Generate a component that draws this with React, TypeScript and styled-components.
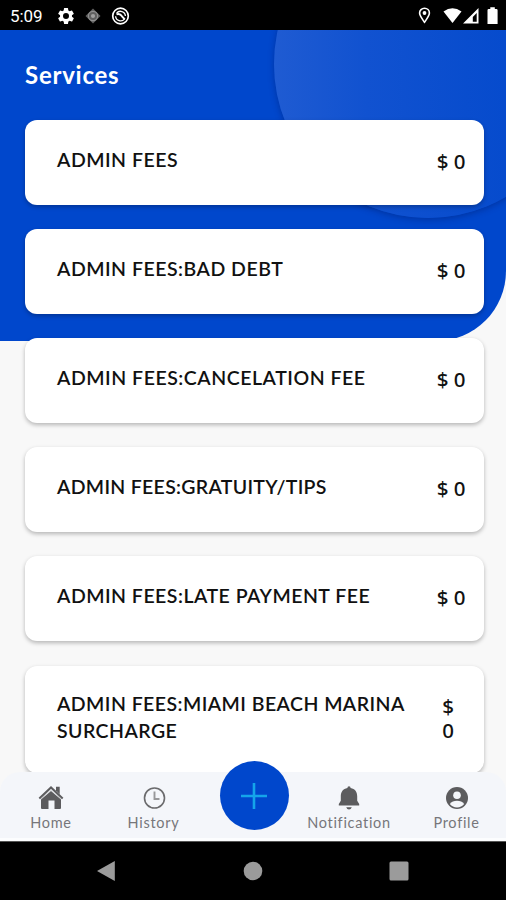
import React from "react";
import styled, { createGlobalStyle } from "styled-components";

const GlobalStyle = createGlobalStyle`
  * { box-sizing: border-box; }
  body { margin: 0; background: #f8f8f8; font-family: Lato, "Open Sans", sans-serif; }
`;

const Phone = styled.div`
  width: 506px;
  height: 900px;
  display: flex;
  flex-direction: column;
  overflow: hidden;
  background: #f8f8f8;
`;

const StatusBar = styled.header`
  height: 30px;
  flex: none;
  display: flex;
  align-items: center;
  justify-content: space-between;
  padding: 1px 7px 0 10px;
  background: #000;
  color: #fff;
`;

const StatusGroup = styled.div<{ $gap: number }>`
  display: flex;
  align-items: center;
  gap: ${(p) => p.$gap}px;
  svg { display: block; }
`;

const Clock = styled.span`
  width: 35px;
  font: 400 17px/20px Roboto, sans-serif;
  letter-spacing: -0.1px;
  white-space: nowrap;
  margin-right: 2px;
`;

const Screen = styled.main`
  position: relative;
  height: 742px;
  flex: none;
  overflow: hidden;
`;

const Backdrop = styled.div`
  position: absolute;
  inset: 0 0 auto 0;
  height: 311px;
  overflow: hidden;
  background: #0047cc;
  border-bottom-right-radius: 70px;
`;

const Bubble = styled.div`
  position: absolute;
  left: 274px;
  top: -120px;
  width: 308px;
  height: 308px;
  border-radius: 50%;
  background: linear-gradient(90deg, #1f5bd2 0%, #1152d0 30%, #064bcd 75%, #0047cc 100%);
  box-shadow: 0 2px 6px rgba(0, 20, 90, 0.35);
`;

const Content = styled.div`
  position: relative;
  padding: 30px 22px 0 25px;
`;

const Title = styled.h1`
  margin: 0 0 30px;
  font-size: 24px;
  line-height: 30px;
  font-weight: 700;
  letter-spacing: 0.75px;
  color: #fff;
`;

const ServiceList = styled.div`
  display: grid;
  gap: 24.1px;
`;

const Card = styled.article<{ $tall?: boolean }>`
  height: ${(p) => (p.$tall ? 107 : 85)}px;
  margin-top: ${(p) => (p.$tall ? 0.5 : 0)}px;
  padding: ${(p) => (p.$tall ? "24px 30px 0 32px" : "26px 18.5px 0 32px")};
  display: flex;
  justify-content: space-between;
  border-radius: 12px;
  background: #fff;
  box-shadow: 0 2px 4px rgba(0, 0, 0, 0.27);
`;

const ServiceName = styled.span<{ $spacing: number }>`
  width: 360px;
  font-size: 19.5px;
  line-height: 27px;
  font-weight: 600;
  letter-spacing: ${(p) => p.$spacing}px;
  color: #111;
`;

const Price = styled.span<{ $stacked?: boolean }>`
  width: ${(p) => (p.$stacked ? "12px" : "auto")};
  padding-top: ${(p) => (p.$stacked ? 4 : 3)}px;
  font-family: "Noto Sans", sans-serif;
  font-size: 20.5px;
  line-height: 24px;
  font-weight: 500;
  text-align: center;
  color: #111;
  white-space: ${(p) => (p.$stacked ? "normal" : "nowrap")};
`;

const TabDock = styled.nav`
  height: 69px;
  flex: none;
  position: relative;
  display: grid;
  grid-template-columns: 102px 102px 100px 90px 112px;
  background: #f4f6fa;
  border-bottom: 3px solid #fcfdfe;
  border-radius: 20px 20px 0 0;
`;

const Tab = styled.a<{ $shift?: number }>`
  display: flex;
  flex-direction: column;
  align-items: center;
  padding-top: 12px;
  padding-left: ${(p) => p.$shift || 0}px;
  color: #5c5c5e;
  svg { display: block; }
`;

const TabLabel = styled.span`
  margin-top: 4px;
  font-size: 14.5px;
  line-height: 17px;
  letter-spacing: 0.7px;
  color: #77777a;
`;

const AddButton = styled.button`
  justify-self: center;
  width: 69px;
  height: 69px;
  margin-top: -11px;
  padding: 0;
  border: 0;
  border-radius: 50%;
  display: grid;
  place-items: center;
  background: #0047cc;
`;

const SystemNav = styled.footer`
  flex: 1;
  padding: 0 97px 0 96px;
  display: flex;
  align-items: center;
  justify-content: space-between;
  background: #000;
  border-top: 1px solid #555;
`;

const services = [
  { name: "ADMIN FEES", spacing: 0.5 },
  { name: "ADMIN FEES:BAD DEBT", spacing: 0.5 },
  { name: "ADMIN FEES:CANCELATION FEE", spacing: 0.53 },
  { name: "ADMIN FEES:GRATUITY/TIPS", spacing: 0.3 },
  { name: "ADMIN FEES:LATE PAYMENT FEE", spacing: 0.49 },
  { name: "ADMIN FEES:MIAMI BEACH MARINA SURCHARGE", spacing: 0.45, tall: true },
];

const GearIcon = () => (
  <svg width="20" height="20" viewBox="0 0 24 24" fill="#fff">
    <path d="M19.14 12.94c.04-.3.06-.61.06-.94s-.02-.64-.07-.94l2.03-1.58a.5.5 0 0 0 .12-.61l-1.92-3.32a.49.49 0 0 0-.59-.22l-2.39.96a7 7 0 0 0-1.62-.94L14.4 2.81a.48.48 0 0 0-.48-.41h-3.84a.47.47 0 0 0-.47.41l-.36 2.54c-.59.24-1.13.57-1.62.94l-2.39-.96a.48.48 0 0 0-.59.22L2.74 8.87a.47.47 0 0 0 .12.61l2.03 1.58a6 6 0 0 0 0 1.88l-2.03 1.58a.5.5 0 0 0-.12.61l1.92 3.32c.12.22.37.29.59.22l2.39-.96c.5.38 1.03.7 1.62.94l.36 2.54c.05.24.24.41.48.41h3.84c.24 0 .44-.17.47-.41l.36-2.54a7 7 0 0 0 1.62-.94l2.39.96c.22.08.47 0 .59-.22l1.92-3.32a.47.47 0 0 0-.12-.61zM12 15.6a3.6 3.6 0 1 1 0-7.2 3.6 3.6 0 0 1 0 7.2z" />
  </svg>
);

const TargetIcon = () => (
  <svg width="16" height="16" viewBox="0 0 16 16" fill="none">
    <path d="M8 .5 15.5 8 8 15.5.5 8z" fill="#606060" />
    <circle cx="8" cy="8" r="4.6" stroke="#909090" strokeWidth="1.1" />
    <circle cx="8" cy="8" r="2.1" fill="#a0a0a0" />
  </svg>
);

const SyncIcon = () => (
  <svg width="20" height="18" viewBox="0 0 20 18" fill="none" stroke="#fff">
    <circle cx="10.5" cy="9" r="7.8" strokeWidth="1.7" />
    <path d="M6.5 6.4A4.9 4.9 0 0 1 15.4 9M14.5 11.8A4.9 4.9 0 0 1 5.6 9.300" strokeWidth="1.3" />
    <path d="M6.5 7.3Q10 6 12 9.300L14.800 12.300" strokeWidth="1.9" />
  </svg>
);

const PinIcon = () => (
  <svg width="13" height="17" viewBox="0 0 13 17" fill="none" stroke="#fff">
    <path d="M6.5 15.2C4.1 11.8 1.6 8.9 1.6 6.1a4.9 4.9 0 0 1 9.8 0c0 2.8-2.5 5.7-4.9 9.1z" strokeWidth="1.6" />
    <circle cx="6.5" cy="6" r="1.9" fill="#fff" stroke="none" />
  </svg>
);

const SignalIcons = () => (
  <svg width="56" height="18" viewBox="0 0 56 18" fill="#fff">
    <path d="M.5 4.5Q9.5-2 18.5 4.500L9.500 16z" />
    <path d="M35.5 1v15.5H20zM33.7 6 29.8 10v4.700h3.900z" fillRule="evenodd" />
    <path d="M44.5 3.200q0-1.200 1.200-1.200h1.600V.3h4.500V2h1.600q1.200 0 1.200 1.200V17H44.500z" />
  </svg>
);

const HomeIcon = () => (
  <svg width="26" height="26" viewBox="0 0 26 26" fill="currentColor">
    <path d="M3 15.500 13 7l10 8.500V24q0 1-1 1h-5.500v-8.500h-6V25H4q-1 0-1-1z" />
    <path d="M1.300 14.600 13 3.500l11.700 11.100" fill="none" stroke="currentColor" strokeWidth="2" />
    <path d="M18 2.700h3.700v7.500L18 6.500z" />
    <path d="M3 14.800 13 5.500l10 9.300" fill="none" stroke="#c0c1c3" strokeWidth=".9" />
  </svg>
);

const ClockIcon = () => (
  <svg width="26" height="26" viewBox="0 0 26 26" fill="none" stroke="#6b6b6d">
    <circle cx="13.5" cy="14" r="10" strokeWidth="1.6" />
    <path d="M13.5 7.500v7.500h5" strokeWidth="1.9" stroke="#98989a" />
  </svg>
);

const BellIcon = () => (
  <svg width="26" height="26" viewBox="0 0 26 26" fill="currentColor">
    <path d="M11.4 4q0-1.700 1.600-1.700T14.600 4c4.400.8 6.600 4 6.600 8.300v4.500l2 3.200v1.500H2.800V20l2-3.200v-4.500c0-4.300 2.200-7.500 6.600-8.300zM10.200 23.300h5.600Q15 25.500 13 25.500t-2.800-2.200z" />
  </svg>
);

const ProfileIcon = () => (
  <svg width="26" height="26" viewBox="0 0 26 26">
    <circle cx="13" cy="14" r="11" fill="#5c5c5e" />
    <circle cx="13" cy="11.3" r="3.8" fill="#f4f6fa" />
    <path d="M5.8 20q2.500-3.300 7.200-3.300t7.200 3.300A9.300 9.300 0 0 1 5.800 20z" fill="#f4f6fa" />
  </svg>
);

const PlusIcon = () => (
  <svg width="28" height="28" viewBox="0 0 28 28" stroke="#14a5ea" strokeWidth="2.6">
    <path d="M14 1v26M1 14h26" />
  </svg>
);

export default function App() {
  return (
    <>
      <GlobalStyle />
      <Phone>
        <StatusBar>
          <StatusGroup $gap={9}>
            <Clock>5:09</Clock>
            <GearIcon />
            <TargetIcon />
            <SyncIcon />
          </StatusGroup>
          <StatusGroup $gap={12}>
            <PinIcon />
            <SignalIcons />
          </StatusGroup>
        </StatusBar>
        <Screen>
          <Backdrop>
            <Bubble />
          </Backdrop>
          <Content>
            <Title>Services</Title>
            <ServiceList>
              {services.map((s) => (
                <Card key={s.name} $tall={s.tall}>
                  <ServiceName $spacing={s.spacing}>{s.name}</ServiceName>
                  <Price $stacked={s.tall}>$ 0</Price>
                </Card>
              ))}
            </ServiceList>
          </Content>
        </Screen>
        <TabDock>
          <Tab>
            <HomeIcon />
            <TabLabel>Home</TabLabel>
          </Tab>
          <Tab $shift={1}>
            <ClockIcon />
            <TabLabel>History</TabLabel>
          </Tab>
          <AddButton aria-label="Add">
            <PlusIcon />
          </AddButton>
          <Tab>
            <BellIcon />
            <TabLabel>Notification</TabLabel>
          </Tab>
          <Tab $shift={13}>
            <ProfileIcon />
            <TabLabel>Profile</TabLabel>
          </Tab>
        </TabDock>
        <SystemNav>
          <svg width="20" height="22" viewBox="0 0 20 22" fill="#9b9b9b"><path d="M1 11 18.8 1v20z" /></svg>
          <svg width="20" height="20" viewBox="0 0 20 20" fill="#9b9b9b"><circle cx="10" cy="10" r="9.3" /></svg>
          <svg width="20" height="20" viewBox="0 0 20 20" fill="#9b9b9b"><rect x=".5" y=".5" width="19" height="19" rx="1.5" /></svg>
        </SystemNav>
      </Phone>
    </>
  );
}
